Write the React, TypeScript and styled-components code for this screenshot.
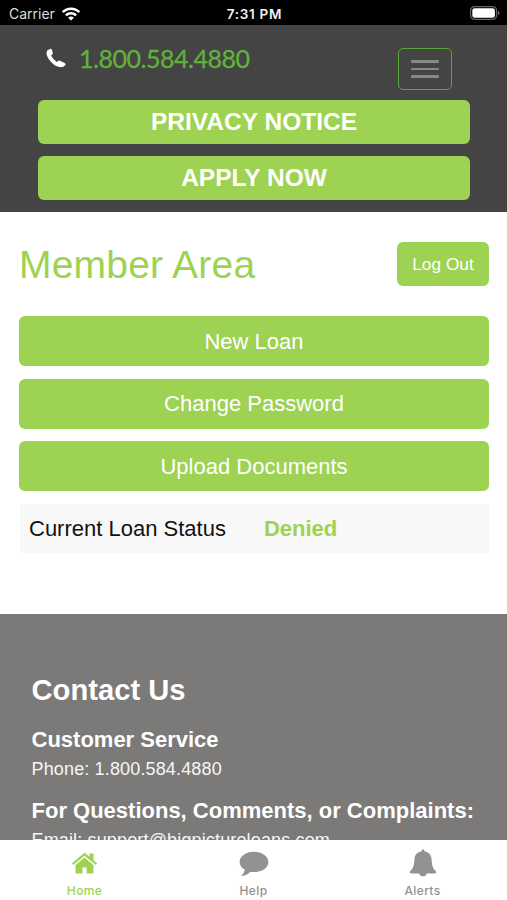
import React from "react";
import styled, { createGlobalStyle } from "styled-components";

const GlobalStyle = createGlobalStyle`
  * { box-sizing: border-box; }
  body { margin: 0; background: #fff; font-family: "Liberation Sans", Arial, sans-serif; }
  h1, h2, h3, p { margin: 0; }
  button { border: 0; padding: 0; font-family: inherit; }
`;

const GREEN = "#9dd253";

const Screen = styled.div`
  width: 507px;
  height: 900px;
  display: flex;
  flex-direction: column;
  overflow: hidden;
  background: #fff;
`;

const StatusBar = styled.div`
  flex: none;
  height: 25px;
  padding: 2px 7px 0 9px;
  display: grid;
  grid-template-columns: 1fr auto 1fr;
  align-items: center;
  background: #000;
  color: #ddd;
  font: 400 14px/22px Inter, sans-serif;
`;

const Carrier = styled.div`
  display: flex;
  align-items: center;
  gap: 6px;
`;

const Clock = styled.div`
  color: #f2f2f2;
  font-weight: 600;
  font-size: 13.5px;
  letter-spacing: 0.7px;
`;

const Battery = styled.svg`
  justify-self: end;
  margin-bottom: 1px;
`;

const Header = styled.header`
  flex: none;
  height: 187px;
  padding: 23px 37px 0 38px;
  background: #444;
`;

const HeaderTop = styled.div`
  height: 51px;
  padding: 0 18px 0 8px;
  display: flex;
  justify-content: space-between;
  align-items: flex-start;
`;

const PhoneLink = styled.div`
  display: flex;
  align-items: center;
  height: 19px;
  gap: 13px;
  color: #5fb33b;
  font: 400 25px/20px Lato, sans-serif;
  letter-spacing: -0.47px;
  -webkit-text-stroke: 0.3px #5fb33b;
`;

const MenuButton = styled.button`
  width: 54px;
  height: 42px;
  border: 1.5px solid #58a838;
  border-radius: 5px;
  background: transparent;
  display: flex;
  flex-direction: column;
  align-items: center;
  justify-content: center;
  gap: 5px;
`;

const MenuLine = styled.span`
  width: 28px;
  height: 2.5px;
  border-radius: 1px;
  background: #888;
`;

const HeaderActions = styled.div`
  display: grid;
  gap: 12px;
  padding-top: 1px;
`;

const HeaderButton = styled.button`
  height: 44px;
  border-radius: 6px;
  background: ${GREEN};
  color: #fff;
  font-size: 24.5px;
  font-weight: 700;
  line-height: 44px;
`;

const Main = styled.main`
  flex: none;
  height: 402px;
  padding: 30px 18px 0 19px;
`;

const TitleRow = styled.div`
  display: flex;
  justify-content: space-between;
  align-items: center;
  height: 44px;
  margin-bottom: 30px;
`;

const Title = styled.h1`
  color: ${GREEN};
  font-size: 39px;
  font-weight: 400;
  line-height: 44px;
  letter-spacing: 0.2px;
  padding-top: 2px;
`;

const LogOut = styled.button`
  width: 92px;
  height: 44px;
  border-radius: 6px;
  background: ${GREEN};
  color: #fff;
  font-size: 17.3px;
`;

const Actions = styled.div`
  display: grid;
  gap: 12.5px;
`;

const ActionButton = styled.button`
  height: 50px;
  padding-top: 1px;
  border-radius: 6px;
  background: ${GREEN};
  color: #fff;
  font-size: 22px;
`;

const LoanStatus = styled.div`
  height: 49px;
  margin: 13px 0 0 1px;
  padding-left: 9px;
  display: flex;
  align-items: center;
  gap: 38px;
  background: #f8f8f8;
  color: #111;
  font-size: 22px;
`;

const StatusValue = styled.strong`
  color: ${GREEN};
`;

const Contact = styled.section`
  flex: none;
  height: 226px;
  overflow: hidden;
  padding: 58px 0 0 31.5px;
  background: #7b7a78;
  color: #fff;
  white-space: nowrap;
`;

const ContactTitle = styled.h2`
  font-size: 29.2px;
  line-height: 36px;
  margin-bottom: 18px;
`;

const ContactHeading = styled.h3`
  font-size: 22px;
  line-height: 28px;
`;

const ContactText = styled.p`
  font-size: 18px;
  line-height: 28px;
  margin: 1px 0 14px;
  letter-spacing: 0.15px;
  color: #f6f6f6;
`;

const TabBar = styled.nav`
  flex: none;
  height: 60px;
  display: grid;
  grid-template-columns: repeat(3, 1fr);
  background: #fff;
`;

const Tab = styled.div<{ $active?: boolean }>`
  display: flex;
  flex-direction: column;
  align-items: center;
  padding-top: 9px;
  color: ${(p) => (p.$active ? GREEN : "#929292")};
  font: 500 12px/16px Inter, sans-serif;
  letter-spacing: 0.35px;
`;

const TabIcon = styled.span`
  display: flex;
  height: 29px;
  margin-bottom: 5px;
  align-items: center;
`;

const WifiIcon = () => (
  <svg width="20" height="14" viewBox="0 0 20 14" fill="none" stroke="#fff" strokeWidth="2.5">
    <path d="M1.7 5.2C6.2.5 13.8.5 18.3 5.2M4.9 8.4c2.8-2.8 7.4-2.8 10.2 0" />
    <path d="M10 13.6 7.1 10.7c1.6-1.5 4.2-1.5 5.8 0Z" fill="#fff" stroke="none" />
  </svg>
);

const BatteryIcon = () => (
  <Battery width="30" height="14" viewBox="0 0 30 14">
    <rect x=".6" y=".6" width="26" height="12.8" rx="4" fill="none" stroke="#666" strokeWidth="1.2" />
    <rect x="2.3" y="2.2" width="22.6" height="9.6" rx="2.4" fill="#fff" />
    <path d="M28 4.8c2 .8 2 3.6 0 4.4Z" fill="#777" />
  </Battery>
);

const PhoneIcon = () => (
  <svg width="20" height="20" viewBox="0 0 20 20" fill="#fff">
    <path d="M1.7 1.9 4.2.9q1.2-.2 1.7.9l.9 3.1q.2 1.2-.8 1.8l-.9.7q1.8 4.1 5.9 6.5l1.4-1.1q.8-.5 1.7-.1l4.6 2.3q1.3.8.7 2-1.6 2.3-4.8 2.3-4.5-.1-9-4.7Q1 9.9.5 5.6q0-2.7 1.2-3.7Z" />
  </svg>
);

const HomeIcon = () => (
  <svg width="27" height="23" viewBox="0 0 27 23" fill="currentColor">
    <path d="M13.5.7.8 11.5l1.4 1.6L13.5 3.7l11.3 9.4 1.4-1.6-3.7-3.2V1.6h-4.1v3.2Z" />
    <path d="m13.5 5.5-9 7.6v7.7q0 .8.8.8h6.1v-6.1h4.2v6.1h6.1q.8 0 .8-.8v-7.7Z" />
  </svg>
);

const CommentIcon = () => (
  <svg width="30" height="26" viewBox="0 0 30 26" fill="currentColor">
    <path d="M15 .7C7 .7.6 5.2.6 10.9c0 3.2 2 6.1 5.2 7.9-.5 2.6-1.8 4.6-3.9 6.3 4.2-.2 7.1-1.8 9.6-4.4q1.7.3 3.5.3c8 0 14.4-4.5 14.4-10.1S23 .7 15 .7Z" />
  </svg>
);

const BellIcon = () => (
  <svg width="28" height="29" viewBox="0 0 28 29" fill="currentColor">
    <path d="M14 .3q1.3 0 1.5 1.9c4.1.8 6.7 3.4 7 7.4.5 7.1 1.2 9.9 4.2 12.5 1.1 1 .7 2.3-.9 2.3h-8.1a3.8 3.8 0 0 1-7.4 0H2.2c-1.6 0-2-1.3-.9-2.3 3-2.6 3.7-5.4 4.2-12.5.3-4 2.9-6.6 7-7.4Q12.7.3 14 .3Z" />
  </svg>
);

export default function App() {
  return (
    <>
      <GlobalStyle />
      <Screen>
        <StatusBar>
          <Carrier>Carrier <WifiIcon /></Carrier>
          <Clock>7:31 PM</Clock>
          <BatteryIcon />
        </StatusBar>
        <Header>
          <HeaderTop>
            <PhoneLink><PhoneIcon />1.800.584.4880</PhoneLink>
            <MenuButton aria-label="Menu"><MenuLine /><MenuLine /><MenuLine /></MenuButton>
          </HeaderTop>
          <HeaderActions>
            <HeaderButton>PRIVACY NOTICE</HeaderButton>
            <HeaderButton>APPLY NOW</HeaderButton>
          </HeaderActions>
        </Header>
        <Main>
          <TitleRow>
            <Title>Member Area</Title>
            <LogOut>Log Out</LogOut>
          </TitleRow>
          <Actions>
            <ActionButton>New Loan</ActionButton>
            <ActionButton>Change Password</ActionButton>
            <ActionButton>Upload Documents</ActionButton>
          </Actions>
          <LoanStatus>
            <span>Current Loan Status</span>
            <StatusValue>Denied</StatusValue>
          </LoanStatus>
        </Main>
        <Contact>
          <ContactTitle>Contact Us</ContactTitle>
          <ContactHeading>Customer Service</ContactHeading>
          <ContactText>Phone: 1.800.584.4880</ContactText>
          <ContactHeading>For Questions, Comments, or Complaints:</ContactHeading>
          <ContactText>Email: support@bigpictureloans.com</ContactText>
        </Contact>
        <TabBar>
          <Tab $active><TabIcon><HomeIcon /></TabIcon>Home</Tab>
          <Tab><TabIcon><CommentIcon /></TabIcon>Help</Tab>
          <Tab><TabIcon><BellIcon /></TabIcon>Alerts</Tab>
        </TabBar>
      </Screen>
    </>
  );
}
